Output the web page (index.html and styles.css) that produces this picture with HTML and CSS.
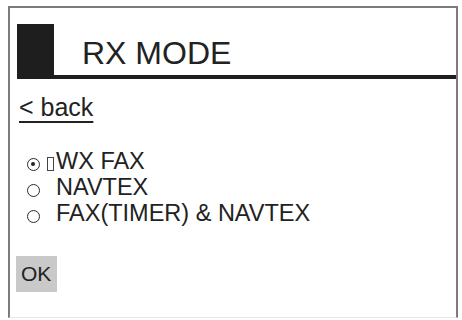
FILE: index.html
```html
<!DOCTYPE html>
<html>
<head>
<meta charset="utf-8">
<link rel="stylesheet" href="styles.css">
</head>
<body>
<div class="frame">
  <div class="header">
    <div class="block"></div>
    <div class="title">RX MODE</div>
  </div>
  <div class="back"><a class="back-link" href="#">&lt; back</a></div>
  <ul class="options">
    <li class="opt"><span class="radio checked"></span><span class="focus"></span><span class="label">WX FAX</span></li>
    <li class="opt"><span class="radio"></span><span class="focus hidden"></span><span class="label">NAVTEX</span></li>
    <li class="opt"><span class="radio"></span><span class="focus hidden"></span><span class="label">FAX(TIMER) &amp; NAVTEX</span></li>
  </ul>
  <div class="actions"><button class="ok">OK</button></div>
</div>
</body>
</html>
```

FILE: styles.css
```css
html, body {
  margin: 0;
  padding: 0;
  background: #ffffff;
}
body {
  font-family: "Liberation Sans", Arial, sans-serif;
  color: #222222;
}
.frame {
  box-sizing: border-box;
  margin: 6px 0 0 8px;
  width: 450px;
  height: 312px;
  border: 2px solid #7c7c7c;
  border-bottom: 1px solid #e6e6e6;
  padding-left: 7px;
}
.header {
  display: flex;
  margin-top: 16px;
  height: 55px;
}
.block {
  width: 37px;
  background: #1e1e1e;
}
.title {
  flex: 1;
  box-sizing: border-box;
  border-bottom: 4px solid #1e1e1e;
  padding: 11px 0 4px 28px;
  font-size: 32px;
  line-height: 36px;
  color: #222222;
}
.back {
  margin-top: 14px;
  margin-left: 2px;
  font-size: 25px;
  line-height: 28px;
}
.back-link {
  color: #222222;
  text-decoration: underline;
  text-decoration-thickness: 2px;
  text-underline-offset: 5px;
}
.options {
  list-style: none;
  margin: 27px 0 0 0;
  padding: 0;
  font-size: 23.5px;
  line-height: 26px;
}
.opt {
  white-space: nowrap;
}
.radio {
  display: inline-block;
  box-sizing: border-box;
  width: 13px;
  height: 13px;
  margin-left: 10px;
  border: 1.5px solid #2a2a2a;
  border-radius: 50%;
  position: relative;
  vertical-align: -2px;
}
.radio.checked::after {
  content: "";
  position: absolute;
  left: 3px;
  top: 3px;
  width: 4px;
  height: 4px;
  border-radius: 50%;
  background: #222222;
}
.focus {
  display: inline-block;
  box-sizing: border-box;
  width: 7px;
  height: 14px;
  margin-left: 7px;
  margin-right: 2px;
  border: 1px solid #444444;
  vertical-align: -2px;
}
.focus.hidden {
  visibility: hidden;
}
.label {
  color: #222222;
}
.actions {
  margin-top: 30px;
  margin-left: -1px;
}
.ok {
  display: flex;
  align-items: center;
  box-sizing: border-box;
  width: 41px;
  height: 36px;
  padding: 0 0 0 5px;
  border: none;
  background: #c9c9c9;
  font-family: "Liberation Sans", Arial, sans-serif;
  font-size: 21px;
  color: #222222;
}
```
